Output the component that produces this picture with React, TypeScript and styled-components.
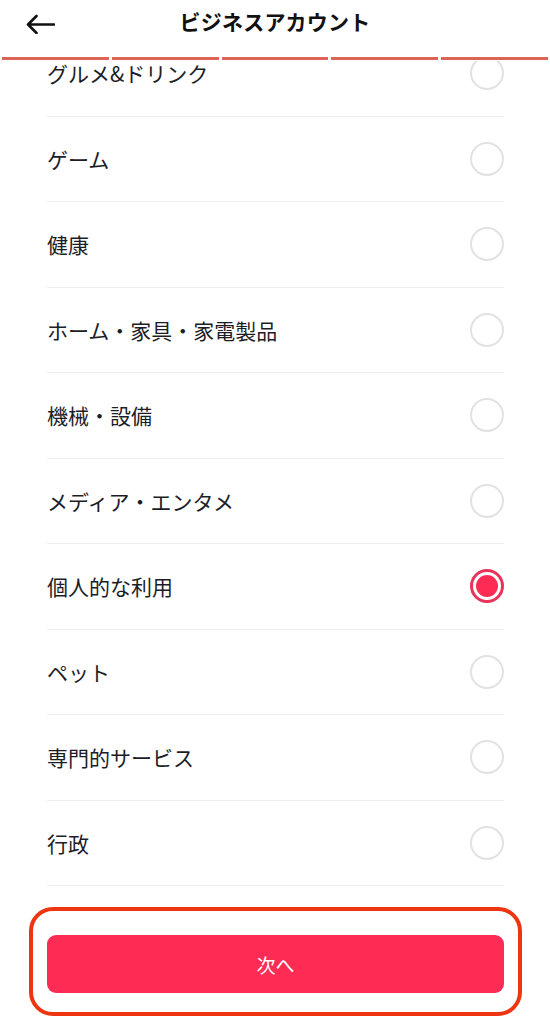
import styled, { createGlobalStyle } from 'styled-components'

const GlobalStyle = createGlobalStyle`
	html, body {
		margin: 0;
		padding: 0;
		background: #fff;
	}
	body {
		font-family: 'Noto Sans CJK JP', 'Noto Sans', sans-serif;
		color: #161823;
	}
`

const Page = styled.div`
	width: 550px;
	height: 1024px;
	overflow: hidden;
	background: #fff;
`

const Header = styled.header`
	position: relative;
	z-index: 1;
	background: #fff;
	padding-bottom: 1px;
`

const TopBar = styled.div`
	position: relative;
	height: 42px;
	display: flex;
	align-items: center;
	justify-content: center;
`

const BackButton = styled.button`
	position: absolute;
	left: 25px;
	top: 14px;
	border: 0;
	padding: 0;
	background: none;
	display: flex;
	cursor: pointer;
`

const Title = styled.h1`
	margin: 0;
	font-size: 21px;
	font-weight: 700;
	color: #111;
	letter-spacing: 0.2px;
`

const Progress = styled.div`
	display: flex;
	gap: 3px;
	padding: 0 2px;
	margin-top: 15px;
`

const Segment = styled.div`
	flex: 1;
	height: 3px;
	background: #dc6457;
`

const List = styled.ul`
	list-style: none;
	margin: -30px 0 0;
	padding: 0 46px 0 47px;
`

const Row = styled.li`
	height: 85.5px;
	display: flex;
	align-items: center;
	justify-content: space-between;
	border-bottom: 1px solid #efefef;
	box-sizing: border-box;
`

const Label = styled.span`
	font-size: 21px;
	color: #1c1d26;
`

const Radio = styled.span<{ $checked?: boolean }>`
	width: 34px;
	height: 34px;
	box-sizing: border-box;
	border-radius: 50%;
	border: ${(p) => (p.$checked ? '3px solid #e8345a' : '2px solid #e2e2e2')};
	padding: 3px;
	display: flex;

	&::after {
		content: '';
		flex: 1;
		border-radius: 50%;
		background: ${(p) => (p.$checked ? '#fe2c55' : 'transparent')};
	}
`

const Highlight = styled.div`
	margin: 21px 28px 0 29px;
	border: 4px solid #ee3512;
	border-radius: 24px;
	padding: 24px 14px 19px;
`

const NextButton = styled.button`
	width: 100%;
	height: 58px;
	border: 0;
	border-radius: 9px;
	background: #fe2c55;
	color: #fff;
	font-family: 'Noto Sans CJK JP', sans-serif;
	font-size: 19px;
	display: block;
`

const categories = [
	'グルメ&ドリンク',
	'ゲーム',
	'健康',
	'ホーム・家具・家電製品',
	'機械・設備',
	'メディア・エンタメ',
	'個人的な利用',
	'ペット',
	'専門的サービス',
	'行政',
]

const App = () => {
	const selected = '個人的な利用'

	return (
		<Page>
			<GlobalStyle />
			<Header>
				<TopBar>
					<BackButton aria-label="戻る">
						<svg width="30" height="20" viewBox="0 0 30 20" fill="none" stroke="#111" strokeWidth="2.6" strokeLinecap="round" strokeLinejoin="round">
							<path d="M3 10.5h26M11.5 2L3 10.5l8.5 8.5" />
						</svg>
					</BackButton>
					<Title>ビジネスアカウント</Title>
				</TopBar>
				<Progress>
					{[0, 1, 2, 3, 4].map((i) => (
						<Segment key={i} />
					))}
				</Progress>
			</Header>

			<List>
				{categories.map((name) => (
					<Row key={name}>
						<Label>{name}</Label>
						<Radio $checked={name === selected} />
					</Row>
				))}
			</List>

			<Highlight>
				<NextButton>次へ</NextButton>
			</Highlight>
		</Page>
	)
}

export default App
